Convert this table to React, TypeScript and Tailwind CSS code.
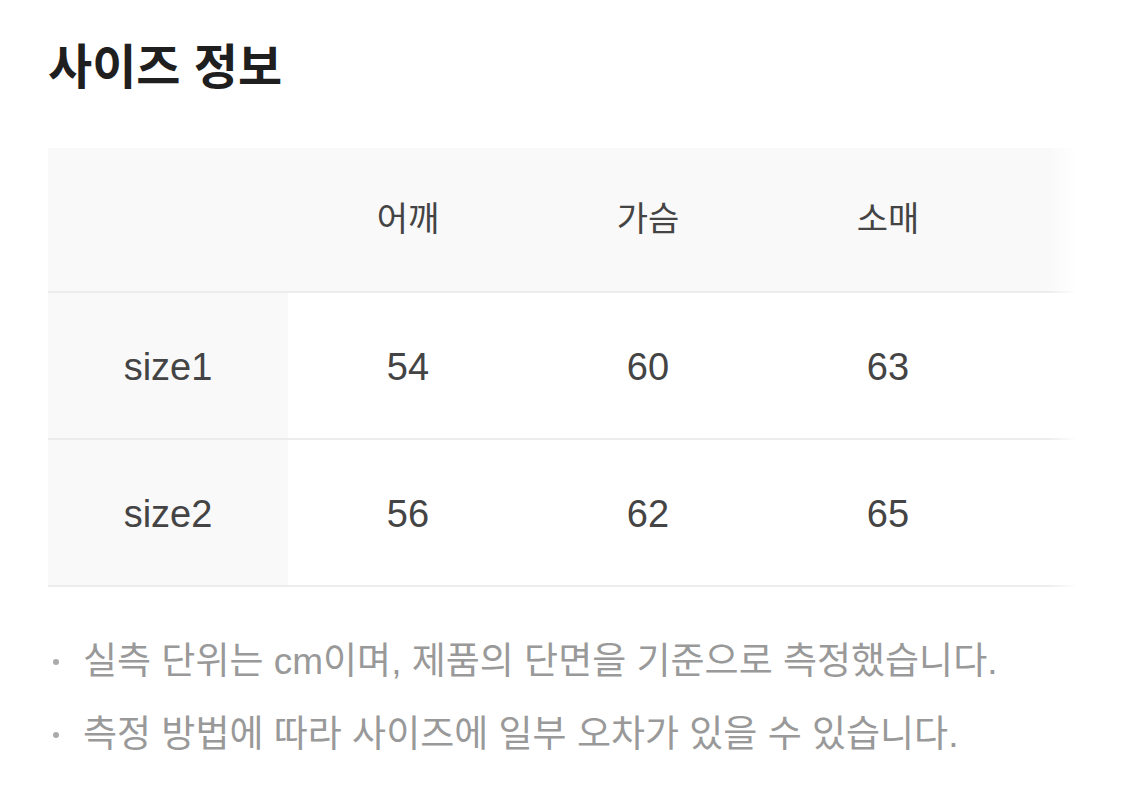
const headers = ['어깨', '가슴', '소매'];

const rows = [
	{ name: 'size1', values: [54, 60, 63] },
	{ name: 'size2', values: [56, 62, 65] },
];

const notes = [
	'실측 단위는 cm이며, 제품의 단면을 기준으로 측정했습니다.',
	'측정 방법에 따라 사이즈에 일부 오차가 있을 수 있습니다.',
];

export default function App() {
	return (
		<div
			className="min-h-[806px] w-[1125px] bg-white px-12 pt-[36px] text-[#333]"
			style={{ fontFamily: '"Liberation Sans", "Noto Sans CJK KR", sans-serif' }}
		>
			<h2 className="text-[48px] font-semibold leading-[64px] text-[#1f1f1f]">사이즈 정보</h2>

			<div className="relative mt-[48px] w-[1029px]">
				<div className="flex h-[145px] items-center border-b-2 border-[#ececec] bg-[#f9f9f9]">
					<div className="w-[240px]" />
					{headers.map(h => (
						<div key={h} className="w-[240px] text-center text-[34px] text-[#444]">
							{h}
						</div>
					))}
				</div>
				{rows.map(row => (
					<div key={row.name} className="flex h-[147px] items-stretch border-b-2 border-[#ececec]">
						<div className="flex w-[240px] items-center justify-center bg-[#f9f9f9] pt-[4px] text-[38px] text-[#444]">
							{row.name}
						</div>
						{row.values.map((v, i) => (
							<div key={i} className="flex w-[240px] items-center justify-center pt-[4px] text-[38px] text-[#444]">
								{v}
							</div>
						))}
					</div>
				))}
				<div className="pointer-events-none absolute top-0 right-0 bottom-0 w-[30px] bg-gradient-to-r from-transparent to-white" />
			</div>

			<ul className="mt-[50px] flex flex-col gap-[23px]">
				{notes.map(n => (
					<li key={n} className="flex items-center text-[37px] leading-[50px] text-[#999]">
						<span className="mr-[24px] ml-[5px] h-[6px] w-[6px] shrink-0 rounded-full bg-[#aaa]" />
						{n}
					</li>
				))}
			</ul>
		</div>
	);
}
